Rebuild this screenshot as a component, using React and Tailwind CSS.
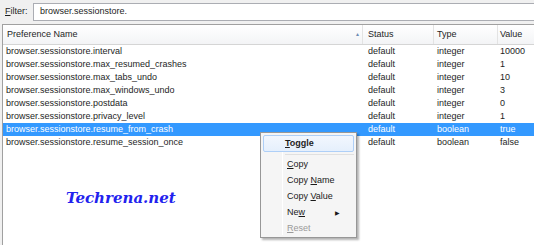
const rows = [
  ["browser.sessionstore.interval", "default", "integer", "10000"],
  ["browser.sessionstore.max_resumed_crashes", "default", "integer", "1"],
  ["browser.sessionstore.max_tabs_undo", "default", "integer", "10"],
  ["browser.sessionstore.max_windows_undo", "default", "integer", "3"],
  ["browser.sessionstore.postdata", "default", "integer", "0"],
  ["browser.sessionstore.privacy_level", "default", "integer", "1"],
  ["browser.sessionstore.resume_from_crash", "default", "boolean", "true"],
  ["browser.sessionstore.resume_session_once", "default", "boolean", "false"],
];

function MenuItem({ children, disabled, arrow }) {
  return (
    <div
      className={`flex h-[16px] items-center whitespace-nowrap pl-[24px] pr-1 ${disabled ? "text-[#9a9a9a]" : "text-[#1a1a1a]"}`}
    >
      <span className="flex-1">{children}</span>
      {arrow && <span className="text-[6px] mr-[10px]">▶</span>}
    </div>
  );
}

export default function App() {
  return (
    <div
      className="relative w-[534px] h-[245px] overflow-hidden bg-[#f0f0f0] text-[9px] text-[#1e1e1e]"
      style={{ fontFamily: '"Liberation Sans", Arial, sans-serif' }}
    >
      <div className="flex items-center h-[23px] pl-[5px] whitespace-nowrap">
        <span className="w-[28px]">
          <span className="underline">F</span>ilter:
        </span>
        <div className="flex-1 h-[18px] bg-white border border-[#abadb3] border-r-0 pl-[6px] flex items-center">
          browser.sessionstore.
        </div>
      </div>

      <div className="ml-[2px] mt-[1px] h-[222px] bg-white border-l border-t border-[#a0a0a0] whitespace-nowrap">
        <div className="flex h-[20px] items-center bg-gradient-to-b from-white to-[#f3f4f6] border-b border-[#d5d5d5]">
          <div className="w-[359px] pl-[4px] flex items-center">
            <span className="flex-1">Preference Name</span>
            <span className="text-[5px] text-[#6d8bb3] mr-[2px]">▲</span>
          </div>
          <div className="w-[71px] h-full border-l border-[#e3e3e3] pl-[5px] flex items-center">Status</div>
          <div className="w-[64px] h-full border-l border-[#e3e3e3] pl-[3px] flex items-center">Type</div>
          <div className="flex-1 h-full border-l border-[#e3e3e3] pl-[2px] flex items-center">Value</div>
        </div>
        {rows.map((r, i) => {
          const sel = i === 6;
          return (
            <div
              key={r[0]}
              className={`flex h-[13px] items-center leading-[13px] ${sel ? "bg-[#3399ff] text-white" : ""}`}
            >
              <div className="w-[359px] pl-[3px]">{r[0]}</div>
              <div className="w-[71px] pl-[6px]">{r[1]}</div>
              <div className="w-[64px] pl-[4px]">{r[2]}</div>
              <div className="flex-1 pl-[3px]">{r[3]}</div>
            </div>
          );
        })}
        <div
          className="mt-[42px] ml-[63px] text-[15px] font-bold italic text-[#2222ee] leading-none"
          style={{ fontFamily: '"DejaVu Serif", serif' }}
        >
          Techrena.net
        </div>
      </div>

      <div className="absolute left-[260px] top-[132px] w-[97px] h-[106px] bg-[#f5f5f5] border border-[#979797] shadow-[2px_2px_2px_rgba(0,0,0,0.3)] p-[2px] whitespace-nowrap">
        <div className="absolute left-[21px] top-[2px] bottom-[2px] w-px bg-[#e2e3e3] border-r border-white" />
        <div className="relative h-[17px] rounded-[2px] border border-[#aecff7] bg-gradient-to-b from-[#f2f7fe] to-[#e5effc] flex items-center pl-[21px] font-bold">
          <span><span className="underline">T</span>oggle</span>
        </div>
        <div className="relative ml-[22px] my-[2px] h-px bg-[#e0e0e0]" />
        <div className="relative">
          <MenuItem><span className="underline">C</span>opy</MenuItem>
          <MenuItem>Copy <span className="underline">N</span>ame</MenuItem>
          <MenuItem>Copy <span className="underline">V</span>alue</MenuItem>
          <MenuItem arrow>Ne<span className="underline">w</span></MenuItem>
          <MenuItem disabled><span className="underline">R</span>eset</MenuItem>
        </div>
      </div>
    </div>
  );
}
